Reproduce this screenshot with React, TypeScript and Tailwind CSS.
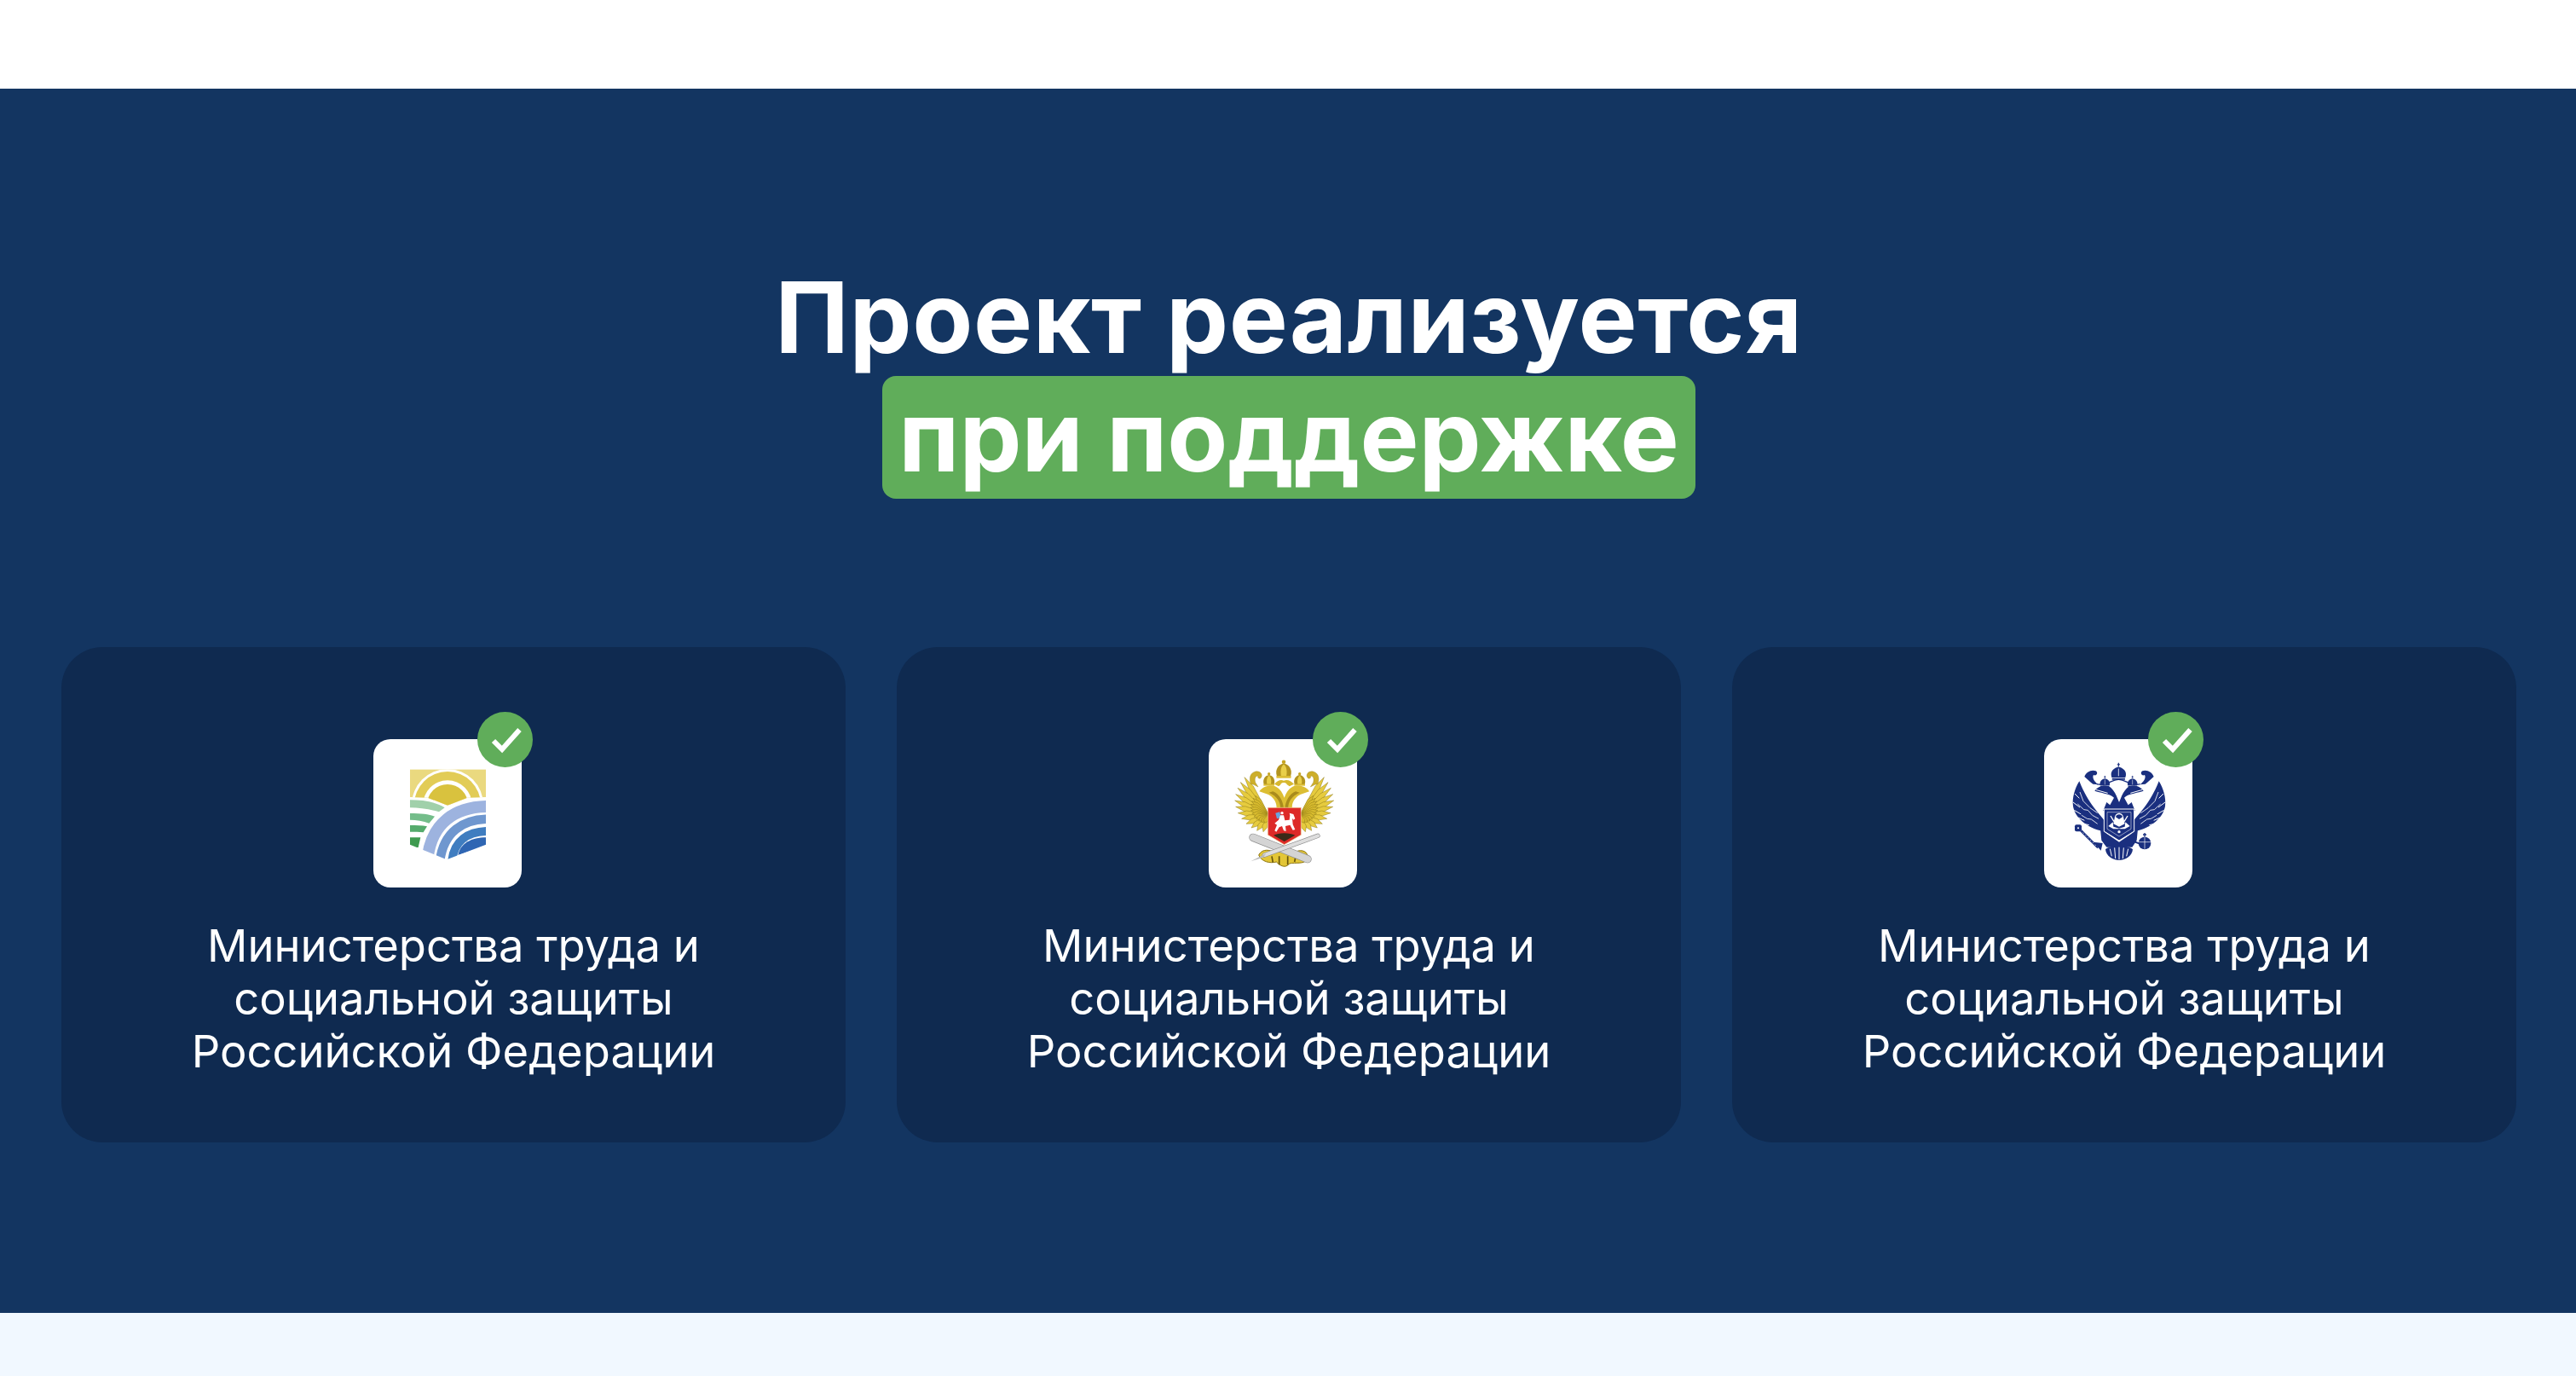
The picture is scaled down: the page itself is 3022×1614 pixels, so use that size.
import React from 'react'

const font = { fontFamily: 'Inter, "Noto Sans", sans-serif' }

// logos use the same 522 unit box so all three line up in the white tile
function FarmLogo() {
  return (
    <svg viewBox="114 144 522 522" className="w-full h-full">
      <defs>
        <clipPath id="farm-shape">
          <polygon points="243,250 510,250 510,515 372,568 243,515" />
        </clipPath>
        <clipPath id="sun-shape">
          <polygon points="243,250 510,250 510,348 445,350 375,377 305,350 243,348" />
        </clipPath>
      </defs>
      <g clipPath="url(#sun-shape)">
        <rect x="243" y="250" width="267" height="100" fill="#ead97f" />
        <circle cx="375" cy="375" r="126" fill="#fff" />
        <circle cx="375" cy="375" r="117" fill="#e2cc56" />
        <circle cx="375" cy="375" r="86" fill="#fff" />
        <circle cx="375" cy="375" r="72" fill="#d9c23e" />
      </g>
      <g clipPath="url(#farm-shape)">
        <path d="M243 358C290 358 335 365 365 385L345 400C310 390 275 385 243 385Z" fill="#a0d0aa" />
        <path d="M243 405C280 405 310 408 330 416L310 440C290 432 265 428 243 428Z" fill="#74bd8a" />
        <path d="M243 447C265 447 285 447 303 451L290 472C275 470 260 470 243 470Z" fill="#55ab6c" />
        <path d="M243 490L280 490L272 525L243 525Z" fill="#3f9a50" />
        <path d="M298 560C310 440 400 380 520 380" fill="none" stroke="#fff" strokeWidth="56" />
        <path d="M305 560C320 440 400 381 520 381" fill="none" stroke="#9db3df" strokeWidth="42" />
        <path d="M348 575C360 470 430 425 520 425" fill="none" stroke="#6f97cf" strokeWidth="32" />
        <path d="M390 580C395 500 450 468 520 468" fill="none" stroke="#3f7dc0" strokeWidth="30" />
        <path d="M412 552C420 510 460 490 510 490L510 520Z" fill="#2f66b3" />
      </g>
    </svg>
  )
}

const goldTips = [
  [240, 278], [226, 296], [216, 316], [209, 338], [206, 360], [209, 382],
  [217, 404], [230, 424], [246, 442], [264, 456], [284, 466], [306, 470],
]

// pointed feather running from the wing root out to its tip
function feather(x: number, y: number, px: number, py: number, w: number) {
  const dx = x - px
  const dy = y - py
  const len = Math.hypot(dx, dy)
  const nx = (-dy / len) * w
  const ny = (dx / len) * w
  const mx = px + dx * 0.72
  const my = py + dy * 0.72
  return `M${px} ${py}L${mx + nx} ${my + ny}L${x} ${y}L${mx - nx} ${my - ny}Z`
}

function GoldWing() {
  return (
    <g>
      {goldTips.map(([x, y], i) => (
        <path key={i} d={feather(x, y, 324, 408, 9)} fill="#e6cb3e" stroke="#8f7a18" strokeWidth="1.5" />
      ))}
      {goldTips.map(([x, y], i) => (
        <path key={i} d={feather((x + 324) / 2 - 4, (y + 408) / 2, 324, 408, 8)} fill="#d8bb2e" stroke="#8f7a18" strokeWidth="1.5" />
      ))}
      <path d="M262 302C256 282 258 264 278 258C296 254 306 270 298 280C292 286 284 280 288 274C280 272 274 280 278 296L288 312L272 304Z" fill="#cdae2a" stroke="#8f7a18" strokeWidth="1" />
    </g>
  )
}

function GoldCrown({ x, y, s }: { x: number; y: number; s: number }) {
  return (
    <g transform={`translate(${x} ${y}) scale(${s})`}>
      <path d="M-18 15C-24-4-12-16 0-18C12-16 24-4 18 15Z" fill="#b3941f" />
      <path d="M-7 14C-10-2-5-13 0-16C5-13 10-2 7 14Z" fill="#e9cf49" />
      <rect x="-19" y="14" width="38" height="6" fill="#dcbd33" />
      <circle cx="0" cy="-22" r="5" fill="#c7a624" />
    </g>
  )
}

function GoldEagle() {
  return (
    <svg viewBox="114 144 522 522" className="w-full h-full">
      <GoldWing />
      <g transform="matrix(-1 0 0 1 760 0)">
        <GoldWing />
      </g>
      <path d="M352 390C356 366 340 346 322 338L292 328C304 310 332 302 352 312C366 320 374 334 380 350C386 334 394 320 408 312C428 302 456 310 468 328L438 338C420 346 404 366 408 390Z" fill="#dcbe33" />
      <path d="M366 388C368 366 354 344 326 332L340 328C362 336 376 362 378 388Z" fill="#a98b1c" />
      <path d="M394 388C392 366 406 344 434 332L420 328C398 336 384 362 382 388Z" fill="#a98b1c" />
      <GoldCrown x={326} y={288} s={1} />
      <GoldCrown x={434} y={288} s={1} />
      <GoldCrown x={378} y={254} s={1.35} />
      <path d="M345 302C355 290 368 284 378 290C390 284 403 290 414 302L398 310C388 300 370 300 360 310Z" fill="#d7b82f" />
      <circle cx="378" cy="309" r="12" fill="#fff" />
      <path d="M322 385H439V481L380 515L322 481Z" fill="#dd2a28" stroke="#f1e0a0" strokeWidth="2" />
      <path d="M349 404L364 400L368 420L354 424Z" fill="#6aa5de" />
      <circle cx="372" cy="404" r="5" fill="#fff" />
      <path d="M366 412L378 412L382 430L398 428L400 412L398 404L412 408L418 424L412 428L408 422L410 444L418 462L410 464L400 446L384 450L386 468L378 466L372 450L362 454L352 470L346 466L354 446L346 440L360 428Z" fill="#fff" />
      <path d="M342 482C360 472 400 472 418 482L380 504Z" fill="#3a2a18" />
      <path d="M290 552C298 534 320 530 340 540L420 540C445 530 462 540 464 562C452 588 420 576 398 582C384 600 366 590 352 576C330 582 300 576 290 552Z" fill="#e3c637" stroke="#8d7511" strokeWidth="3" />
      <path d="M336 556L340 578M362 556V586M392 556V586M420 556L416 576" stroke="#67550b" strokeWidth="5" />
      <line x1="270" y1="490" x2="462" y2="566" stroke="#8f8f8f" strokeWidth="28" strokeLinecap="round" />
      <line x1="270" y1="490" x2="462" y2="566" stroke="#d4d4d4" strokeWidth="24" strokeLinecap="round" />
      <line x1="498" y1="484" x2="310" y2="552" stroke="#8f8f8f" strokeWidth="16" strokeLinecap="round" />
      <line x1="498" y1="484" x2="310" y2="552" stroke="#dedede" strokeWidth="12" strokeLinecap="round" />
      <path d="M316 546L262 574L306 560Z" fill="#b9b9b9" />
    </svg>
  )
}

const navy = '#1a2f7f'

function NavyWing() {
  return (
    <g>
      <path d="M334 440C312 410 268 370 238 292C222 318 212 350 216 380C222 412 250 448 312 466L334 470Z" fill={navy} />
      <path d="M222 336L238 352M216 366L240 384M220 394L244 408M234 420L256 430M254 442L272 446" stroke="#fff" strokeWidth="3" />
      <path d="M240 330L252 362L276 386L302 404" fill="none" stroke="#fff" strokeWidth="2.500" />
      <path d="M232 372L254 392L268 394L284 412L306 424" fill="none" stroke="#fff" strokeWidth="2.500" />
      <path d="M246 412L266 424L280 426L302 442" fill="none" stroke="#fff" strokeWidth="2.500" />
      <path d="M256 276C262 260 280 250 296 256C306 262 298 276 288 270C282 280 292 294 304 304L286 302C276 296 266 284 256 276Z" fill={navy} />
    </g>
  )
}

function NavyCrown({ x, y, s }: { x: number; y: number; s: number }) {
  return (
    <g transform={`translate(${x} ${y}) scale(${s})`}>
      <path d="M-20 14C-27-4-12-15 0-17C12-15 27-4 20 14Z" fill={navy} />
      <path d="M0-12V10" stroke="#fff" strokeWidth="2" />
      <rect x="-19" y="16" width="38" height="5" fill={navy} />
      <path d="M0-29V-18M-4-24H4" stroke={navy} strokeWidth="3" />
    </g>
  )
}

function NavyEagle() {
  return (
    <svg viewBox="114 144 522 522" className="w-full h-full">
      <NavyWing />
      <g transform="matrix(-1 0 0 1 756 0)">
        <NavyWing />
      </g>
      <path d="M322 396L334 366L346 376L360 350C350 338 326 336 292 326C306 306 336 302 350 316C360 326 368 340 372 352L378 366L384 352C388 340 396 326 406 316C420 302 450 306 464 326C430 336 406 338 396 350L410 376L422 366L434 396Z" fill={navy} />
      <path d="M296 322L338 334M460 322L418 334" stroke="#fff" strokeWidth="3" />
      <path d="M300 302C330 312 350 286 376 286C402 286 422 312 452 302" fill="none" stroke={navy} strokeWidth="4" />
      <NavyCrown x={328} y={296} s={0.8} />
      <NavyCrown x={425} y={296} s={0.8} />
      <NavyCrown x={376} y={262} s={1.2} />
      <path d="M312 460L336 478L378 506L420 478L444 460L440 500L424 524H334L316 500Z" fill={navy} />
      <path d="M325 390H431V468L378 501L325 468Z" fill={navy} stroke="#fff" strokeWidth="3" />
      <path d="M336 401H420V460L378 486L336 460Z" fill="none" stroke="#fff" strokeWidth="1.500" />
      <path d="M362 422C364 398 392 398 394 422L398 442L378 452L358 442Z" fill="#fff" />
      <path d="M366 418C368 406 388 406 390 418L378 426Z" fill={navy} />
      <path d="M340 450L356 436L358 452L378 458L398 452L400 436L416 450L398 460H358Z" fill="#fff" />
      <path d="M348 414L360 434M408 414L396 434" stroke="#fff" strokeWidth="4" />
      <circle cx="378" cy="470" r="7" fill="#fff" stroke={navy} strokeWidth="4" />
      <path d="M330 532C345 516 410 516 426 532C424 556 400 570 378 570C356 570 332 556 330 532Z" fill={navy} />
      <path d="M346 530L352 556M362 526L365 564M378 524V568M394 526L391 564M410 530L404 556" stroke="#fff" strokeWidth="3" />
      <path d="M240 462L304 526" stroke={navy} strokeWidth="8" />
      <path d="M242 464L302 524" stroke="#fff" strokeWidth="2" strokeDasharray="5 7" />
      <rect x="222" y="445" width="24" height="24" rx="6" fill={navy} />
      <circle cx="234" cy="457" r="3" fill="#fff" />
      <path d="M288 506L320 510L314 536Z" fill={navy} />
      <circle cx="468" cy="510" r="22" fill={navy} />
      <path d="M447 506H489M468 489V530" stroke="#fff" strokeWidth="2" />
      <path d="M468 488V474M462 480H474" stroke={navy} strokeWidth="4" />
      <path d="M430 504L450 512" stroke={navy} strokeWidth="6" />
    </svg>
  )
}

function CheckBadge() {
  return (
    <div className="absolute top-0 right-[1px] w-[65px] h-[65px] rounded-full bg-[#60ad5a]">
      <svg viewBox="0 0 65 65" className="w-full h-full" fill="none">
        <path d="M19 34L29 44L49.500 21" stroke="#fff" strokeWidth="6" />
      </svg>
    </div>
  )
}

function SupportCard({ logo }: { logo: React.ReactNode }) {
  return (
    <div className="flex flex-col items-center bg-[#0f2a50] rounded-[48px] pt-[76px] pb-[76px]">
      <div className="relative pt-[32px] pr-[14px] mb-[37px]">
        <div className="w-[174px] h-[174px] bg-white rounded-[20px] overflow-hidden">{logo}</div>
        <CheckBadge />
      </div>
      <p className="text-center text-white text-[52.500px] leading-[62px]">
        Министерства труда и<br />
        социальной защиты<br />
        Российской Федерации
      </p>
    </div>
  )
}

export default function App() {
  return (
    <div className="w-[3022px] h-[1614px] bg-white flex flex-col overflow-hidden" style={font}>
      <div className="h-[104px] bg-white" />
      <section className="h-[1436px] bg-[#133561] pl-[72px] pt-[198px]">
        <h2 className="flex flex-col items-center text-white font-bold text-[116px] leading-[141px] mb-[174px] w-[2880px]">
          <span className="tracking-[0.650px]">Проект реализуется</span>
          <span className="bg-[#60ad5a] rounded-[16px] px-[19px] h-[144px] -mt-[2px]">при поддержке</span>
        </h2>
        <div className="grid grid-cols-3 gap-[60px] w-[2880px]">
          <SupportCard logo={<FarmLogo />} />
          <SupportCard logo={<GoldEagle />} />
          <SupportCard logo={<NavyEagle />} />
        </div>
      </section>
      <div className="flex-1 bg-[#f1f8ff]" />
    </div>
  )
}
